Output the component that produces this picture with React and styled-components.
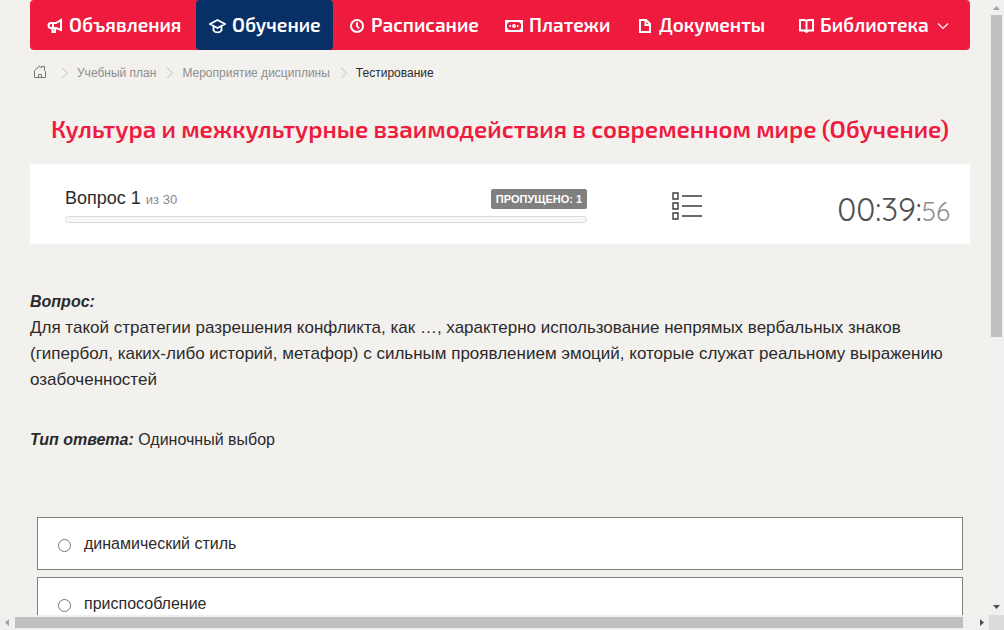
import React from "react";
import styled, { createGlobalStyle } from "styled-components";

const GlobalStyle = createGlobalStyle`
  *, *::before, *::after { box-sizing: border-box; }
  body {
    margin: 0;
    background: #f3f1ee;
    color: #2b2b2b;
    font: 16px/26px "Liberation Sans", Arial, sans-serif;
  }
`;

const Frame = styled.div`
  display: grid;
  grid-template: minmax(0, 1fr) 15px / minmax(0, 1fr) 15px;
  height: 100vh;
`;

const Viewport = styled.div`
  overflow: hidden;
  padding: 0 19px 0 30px;
`;

const Track = styled.div`
  display: flex;
  flex-direction: ${(p) => (p.$vertical ? "column" : "row")};
  align-items: center;
  background: #f0f0f1;
`;

const Arrow = styled.svg`
  flex: none;
  width: 15px;
  height: 15px;
  fill: ${(p) => (p.$active ? "#4d4d4d" : "#a0a0a0")};
`;

const Rail = styled.div`
  flex: 1;
  align-self: stretch;
  display: flex;
  flex-direction: ${(p) => (p.$vertical ? "column" : "row")};
  padding: ${(p) => (p.$vertical ? "0 2px" : "2px 0")};
`;

const Thumb = styled.div`
  flex: 0 0 ${(p) => p.$length};
  background: #c0c0c0;
`;

const Corner = styled.div`
  background: #dcdcdc;
`;

const Nav = styled.nav`
  display: grid;
  grid-template-columns: 166fr 137fr 155fr 133fr 161fr 188fr;
  height: 50px;
  border-radius: 4px;
  background: #ee1b3f;
`;

const NavLink = styled.a`
  display: flex;
  align-items: center;
  gap: 6px;
  padding: 0 0 1px ${(p) => (p.$active ? 13 : 17)}px;
  border-radius: 4px;
  background: ${(p) => (p.$active ? "#083066" : "transparent")};
  color: #fff;
  font: 600 19px/24px "Exo 2", Roboto, sans-serif;
  text-decoration: none;
  white-space: nowrap;
`;

const NavIcon = styled.svg`
  flex: none;
  width: ${(p) => p.$w}px;
  height: 16px;
  margin-top: 2px;
  fill: none;
  stroke: #fff;
  stroke-width: 2;
`;

const Crumbs = styled.nav`
  display: flex;
  align-items: center;
  height: 20px;
  margin-top: 13px;
  padding-left: 3px;
  font-size: 12px;
  line-height: 20px;
`;

const Crumb = styled.a`
  display: flex;
  color: ${(p) => (p.$current ? "#2b2b2b" : "#8e8e8e")};
  text-decoration: none;
`;

const CrumbArrow = styled.svg`
  width: 8px;
  height: 12px;
  margin: 0 8px 0 10px;
  fill: none;
  stroke: #c4c4c4;
`;

const HomeIcon = styled.svg`
  width: 14px;
  height: 14px;
  margin: 0 4px 2px 0;
  fill: none;
  stroke: #777;
`;

const Title = styled.h1`
  margin: 30px 0 0;
  color: #ee1b3f;
  font: 600 24px/32px "Exo 2", Roboto, sans-serif;
  text-align: center;
  white-space: nowrap;
`;

const Status = styled.section`
  display: flex;
  align-items: center;
  height: 80px;
  margin-top: 19px;
  padding: 4px 20px 0 35px;
  background: #fff;
`;

const Progress = styled.div`
  width: 59%;
`;

const ProgressHead = styled.div`
  display: flex;
  align-items: center;
  justify-content: space-between;
  height: 20px;
  font-size: 18px;
  line-height: 20px;
`;

const Total = styled.small`
  color: #8a8a8a;
  font-size: 13px;
`;

const Badge = styled.span`
  padding: 0 5px;
  border-radius: 2px;
  background: #808080;
  color: #fff;
  font-size: 11px;
  font-weight: 700;
  line-height: 20px;
`;

const Bar = styled.div`
  height: 7px;
  margin-top: 7px;
  border: 1px solid #dadada;
  border-radius: 4px;
  background: #f8f8f8;
`;

const ListButton = styled.button`
  display: flex;
  margin-left: 84px;
  padding: 0;
  border: 0;
  background: none;
`;

const ListIcon = styled.svg`
  width: 32px;
  height: 30px;
  fill: none;
  stroke: #3c3c3c;
  stroke-width: 1.4;
`;

const Timer = styled.div`
  margin: 8px 0 0 auto;
  color: #505050;
  font: 400 32px/40px Quicksand, Lato, sans-serif;
`;

const Seconds = styled.span`
  color: #8e8e8e;
  font-size: 26px;
`;

const Question = styled.section`
  margin-top: 45px;
`;

const QuestionText = styled.p`
  margin: 0;
  font-size: 17px;
`;

const AnswerType = styled.p`
  margin: 34px 0 0;
`;

const Term = styled.strong`
  font-style: italic;
`;

const Answers = styled.form`
  display: grid;
  gap: 7px;
  margin-top: 64px;
  padding: 0 7px;
`;

const Answer = styled.label`
  display: flex;
  align-items: center;
  height: 53px;
  padding-left: 20px;
  border: 1px solid #808080;
  background: #fff;
`;

const Radio = styled.input`
  width: 13px;
  height: 13px;
  margin: 4px 13px 0 0;
`;

const links = [
  {
    text: "Объявления",
    w: 16,
    icon: <path d="M14 2v10L9 10H6V5h3zM6.500 5H4a2.500 2.500 0 0 0 0 5h2.500M5.500 10v4H8v-4" />,
  },
  {
    text: "Обучение",
    w: 17,
    active: true,
    icon: (
      <path d="M1 6 8.500 2 16 6l-7.500 4zM4.500 8v4.500c2 2.500 6 2.500 8 0V8" strokeWidth="1.800" />
    ),
  },
  {
    text: "Расписание",
    w: 15,
    icon: (
      <>
        <circle cx="7" cy="8" r="6" />
        <path d="M7 4.500V8l2 2.500" />
      </>
    ),
  },
  {
    text: "Платежи",
    w: 18,
    icon: (
      <>
        <path d="M1 3h16v10H1z" />
        <circle cx="9" cy="8" r="1.900" fill="#fff" stroke="none" />
        <path d="M4.500 8H6M12 8h1.500" />
        <path
          d="M2 4h2L2 6zM16 4h-2L16 6zM2 12h2L2 10zM16 12h-2L16 10z"
          fill="#fff"
          stroke="none"
        />
      </>
    ),
  },
  {
    text: "Документы",
    w: 15,
    icon: <path d="M2 2h6l4 4v8H2zM7.500 2v5H12" />,
  },
  {
    text: "Библиотека",
    w: 15,
    menu: true,
    icon: <path d="M1 2h4.500l2 1 2-1H14v10.500H9.500l-2 1.500-2-1.500H1zM7.500 3v11" />,
  },
];

const Separator = () => (
  <CrumbArrow viewBox="0 0 8 12" aria-hidden="true">
    <path d="M1 1l5.500 5L1 11" />
  </CrumbArrow>
);

const answers = ["динамический стиль", "приспособление"];

export default function App() {
  return (
    <Frame>
      <GlobalStyle />
      <Viewport>
        <Nav>
          {links.map((l) => (
            <NavLink key={l.text} href="#" $active={l.active}>
              <NavIcon $w={l.w} viewBox={`0 0 ${l.w} 16`} aria-hidden="true">
                {l.icon}
              </NavIcon>
              {l.text}
              {l.menu && (
                <NavIcon $w={16} viewBox="0 0 16 16" aria-hidden="true">
                  <path d="M3 5.500l5 5 5-5" strokeWidth="1.200" />
                </NavIcon>
              )}
            </NavLink>
          ))}
        </Nav>
        <Crumbs>
          <Crumb href="#" aria-label="Главная">
            <HomeIcon viewBox="0 0 14 14">
              <path d="M1.500 12.500V5.500L6 1.500h1l1.500 1.500V1.500h3v4l1 1v6zM5.500 12V9.500h3V12" />
            </HomeIcon>
          </Crumb>
          <Separator />
          <Crumb href="#">Учебный план</Crumb>
          <Separator />
          <Crumb href="#">Мероприятие дисциплины</Crumb>
          <Separator />
          <Crumb as="span" $current>
            Тестирование
          </Crumb>
        </Crumbs>
        <Title>Культура и межкультурные взаимодействия в современном мире (Обучение)</Title>
        <Status>
          <Progress>
            <ProgressHead>
              <span>
                Вопрос 1 <Total>из 30</Total>
              </span>
              <Badge>ПРОПУЩЕНО: 1</Badge>
            </ProgressHead>
            <Bar />
          </Progress>
          <ListButton type="button" aria-label="Список вопросов">
            <ListIcon viewBox="0 0 32 30">
              <path d="M2 2h5v6H2zM2 12h5v6H2zM2 22h5v6H2zM11 5h20M11 15h20M11 25h20" />
            </ListIcon>
          </ListButton>
          <Timer>
            00:39:<Seconds>56</Seconds>
          </Timer>
        </Status>
        <Question>
          <Term>Вопрос:</Term>
          <QuestionText>
            Для такой стратегии разрешения конфликта, как …, характерно использование непрямых
            вербальных знаков (гипербол, каких-либо историй, метафор) с сильным проявлением эмоций,
            которые служат реальному выражению озабоченностей
          </QuestionText>
          <AnswerType>
            <Term>Тип ответа:</Term> Одиночный выбор
          </AnswerType>
        </Question>
        <Answers>
          {answers.map((a) => (
            <Answer key={a}>
              <Radio type="radio" name="answer" />
              {a}
            </Answer>
          ))}
        </Answers>
      </Viewport>
      <Track $vertical>
        <Arrow viewBox="0 0 15 15">
          <path d="M4 10h7L7.500 6z" />
        </Arrow>
        <Rail $vertical>
          <Thumb $length="55%" />
        </Rail>
        <Arrow viewBox="0 0 15 15" $active>
          <path d="M4 5h7L7.500 9z" />
        </Arrow>
      </Track>
      <Track>
        <Arrow viewBox="0 0 15 15">
          <path d="M9 4v7L5 7.500z" />
        </Arrow>
        <Rail>
          <Thumb $length="98.900%" />
        </Rail>
        <Arrow viewBox="0 0 15 15" $active>
          <path d="M6 4v7l4-3.500z" />
        </Arrow>
      </Track>
      <Corner />
    </Frame>
  );
}
